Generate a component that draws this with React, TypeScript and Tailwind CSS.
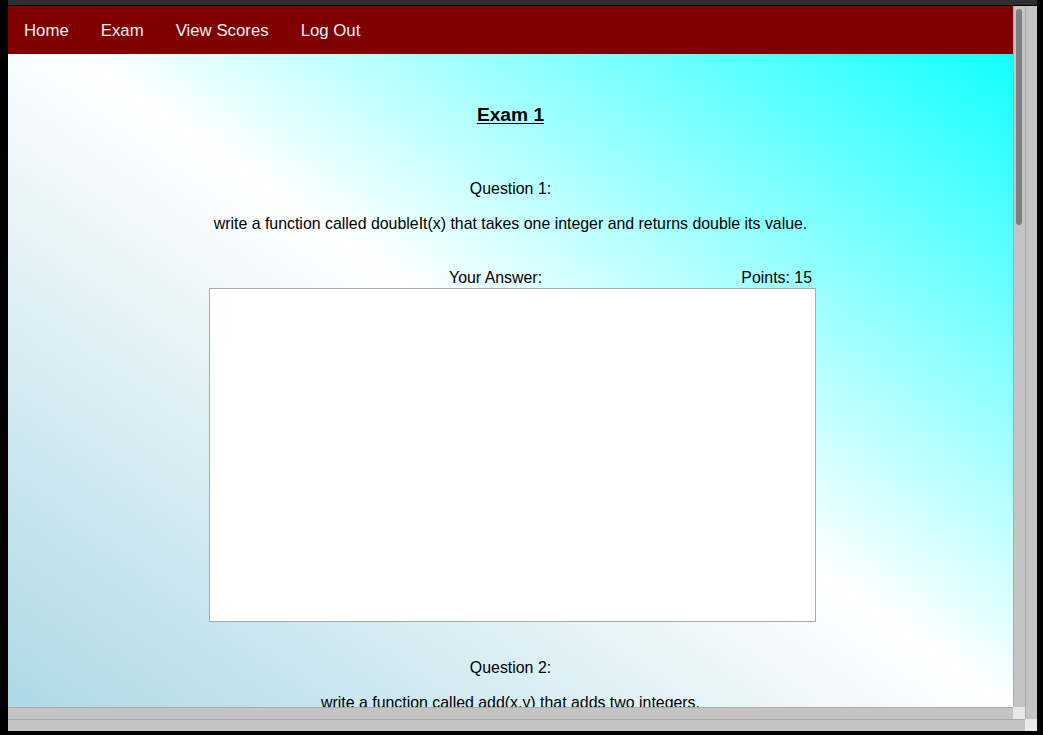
const navLinks = ['Home', 'Exam', 'View Scores', 'Log Out'];

function VBar({ thumb }: { thumb?: boolean }) {
  return (
    <div className="w-[12px] shrink-0 bg-[#c4c4c4] border-l border-[#ababab] relative">
      {thumb && (
        <div className="absolute left-[2px] top-[3px] w-[6px] h-[216px] rounded-full bg-[#7d7f80]" />
      )}
    </div>
  );
}

function HBar() {
  return <div className="flex-1 h-[12px] bg-[#c4c4c4] border-t border-[#ababab]" />;
}

function Corner() {
  return <div className="w-[12px] h-[12px] shrink-0 bg-[#e8e8e8]" />;
}

export default function App() {
  return (
    <div className="w-[1043px] h-[735px] bg-black flex overflow-hidden" style={{ fontFamily: '"Liberation Sans", Arial, sans-serif' }}>
      <div className="w-[8px] shrink-0" />
      <div className="w-[1029px] flex flex-col">
        <div className="h-[5px] bg-[#2e2e2e]" />
        <div className="h-[1px] bg-black" />

        {/* window area */}
        <div className="h-[725px] flex flex-col">
          <div className="flex h-[713px]">
            <div className="w-[1017px] flex flex-col">
              <div className="flex h-[701px]">
                {/* page content */}
                <div className="w-[1005px] h-[701px] overflow-hidden bg-[linear-gradient(to_top_right,#add8e6,#ffffff,#00ffff)] text-black text-[15.9px]">
                  <nav className="h-[48px] bg-[#800000] flex items-center pt-[2px]">
                    {navLinks.map((l) => (
                      <a key={l} className="px-[16px] text-[16.8px] text-[#f0f0f0] leading-[20px]">
                        {l}
                      </a>
                    ))}
                  </nav>

                  <div className="flex flex-col items-center">
                    <h2 className="mt-[50px] text-[19.2px] leading-[22px] font-bold underline underline-offset-[2px]">Exam 1</h2>

                    <p className="mt-[54px] leading-[18px]">Question 1:</p>
                    <p className="mt-[17px] leading-[18px]">write a function called doubleIt(x) that takes one integer and returns double its value.</p>

                    <div className="mt-[36px] w-[607px] flex leading-[18px] ml-[4px]">
                      <span className="ml-[240px]">Your Answer:</span>
                      <span className="ml-auto mr-[4px]">Points: 15</span>
                    </div>
                    <textarea className="mt-[1px] ml-[4px] w-[607px] h-[334px] bg-white border border-[#aaaaaa] resize-none outline-none" />

                    <p className="mt-[37px] leading-[18px]">Question 2:</p>
                    <p className="mt-[17px] leading-[18px]">write a function called add(x,y) that adds two integers.</p>
                  </div>
                </div>
                <VBar thumb />
              </div>
              <div className="flex h-[12px]">
                <HBar />
                <Corner />
              </div>
            </div>
            <VBar />
          </div>
          <div className="flex h-[12px]">
            <HBar />
            <Corner />
          </div>
        </div>
        <div className="flex-1 bg-black" />
      </div>
    </div>
  );
}
